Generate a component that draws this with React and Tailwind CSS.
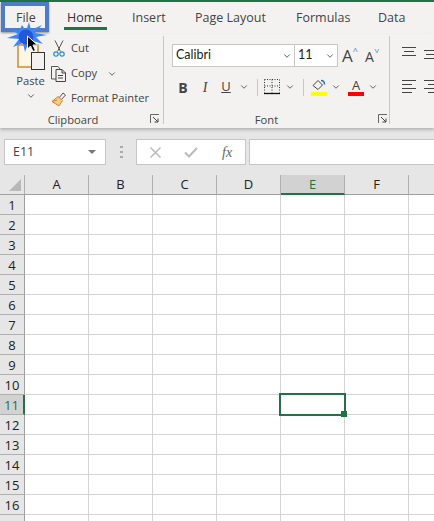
import React from "react";
import { ChevronDown } from "lucide-react";

const tabs = ["Insert", "Page Layout", "Formulas", "Data"];
const cols = ["A", "B", "C", "D", "E", "F"];
const rows = [1, 2, 3, 4, 5, 6, 7, 8, 9, 10, 11, 12, 13, 14, 15, 16];

const Chev = ({ className = "" }) => (
    <ChevronDown size={10} strokeWidth={2} className={"shrink-0 text-[#444] " + className} />
);

const Launcher = () => (
    <svg width="10" height="10" viewBox="0 0 10 10" className="shrink-0">
        <path d="M.5 9V.5H9" fill="none" stroke="#666" />
        <path d="M3 3l5 5M8 4.500V8H4.500" fill="none" stroke="#444" />
    </svg>
);

const PasteIcon = () => (
    <svg width="28" height="26" viewBox="0 0 28 26">
        <rect x="1" y="1" width="20" height="22" fill="#fff7e6" stroke="#d08a35" strokeWidth="1.500" />
        <rect x="14.500" y="8.500" width="13" height="17" fill="#f3f2f1" stroke="#333" />
    </svg>
);

const ScissorsIcon = () => (
    <svg width="12" height="18" viewBox="0 0 12 18">
        <path d="M2 0.500l5.500 11M10 0.500L4.500 11.500" fill="none" stroke="#555" />
        <circle cx="3" cy="14" r="2.200" fill="none" stroke="#2a8dd4" strokeWidth="1.200" />
        <circle cx="9" cy="14" r="2.200" fill="none" stroke="#2a8dd4" strokeWidth="1.200" />
    </svg>
);

const CopyIcon = () => (
    <svg width="16" height="16" viewBox="0 0 16 16">
        <path d="M5 13H.5V.5H7l2 2.500" fill="none" stroke="#555" />
        <path d="M5 3.500h6l3.500 3.500v8.500H5zM11 3.500V7h3.500M7 9.500h5M7 12h5" fill="none" stroke="#444" />
    </svg>
);

const PainterIcon = () => (
    <svg width="16" height="16" viewBox="0 0 16 16">
        <path d="M8 7l4-5 2.500 2L10 9z" fill="#f3f2f1" stroke="#555" />
        <path d="M7 5.500l4.500 4L8 15 1 10.500z" fill="#f7c98b" stroke="#d9822b" />
        <path d="M1 10.500l5-1.500" fill="none" stroke="#d9822b" />
    </svg>
);

const BorderIcon = () => (
    <svg width="16" height="16" viewBox="0 0 16 16">
        <path d="M.5 .5h15M.5 .5v13M15.500 .5v13M8 .5v13M.5 7h15" fill="none" stroke="#333" strokeDasharray="1 1.500" />
        <path d="M0 14.500h16" stroke="#111" strokeWidth="1.300" />
    </svg>
);

const FillIcon = () => (
    <div className="flex flex-col items-center w-4">
        <svg width="14" height="12" viewBox="0 0 14 12">
            <path d="M1 6.500L6 1.500l4.500 4.500L6 10.500z" fill="#f3f2f1" stroke="#444" />
            <path d="M9 1.500c2.500 0 3.500 1.500 3.500 4" fill="none" stroke="#2a6fb0" strokeWidth="1.500" />
        </svg>
        <div className="w-4 h-1 mt-px bg-[#ffff00]" />
    </div>
);

const AlignTop = ({ shift }) => (
    <svg width="14" height="14" viewBox="0 0 14 14" className="shrink-0">
        <path
            d={shift ? "M0 4.500h14M2 8.500h12M0 12.500h14" : "M0 1.500h14M2 5.500h10M0 9.500h14"}
            fill="none"
            stroke="#444"
        />
    </svg>
);

const AlignBottom = ({ right }) => (
    <svg width="14" height="14" viewBox="0 0 14 14" className="shrink-0">
        <path
            d={right ? "M0 .5h14M4 4.500h10M0 8.500h14M4 12.500h10" : "M0 .5h14M0 4.500h10M0 8.500h14M0 12.500h10"}
            fill="none"
            stroke="#444"
        />
    </svg>
);

const Sep = () => <div className="w-px h-[17px] bg-[#c8c8c8] shrink-0" />;

function Ribbon() {
    return (
        <div className="h-[94px] flex bg-[#f3f2f1] shadow-[0_2px_3px_rgba(0,0,0,0.22)] relative z-10 text-[11.200px]">
            {/* clipboard */}
            <div className="w-[163px] shrink-0 relative flex flex-col">
                <div className="flex-1 flex pt-[10px] pl-[17px]">
                    <div className="w-[27px] flex flex-col items-center">
                        <PasteIcon />
                        <span className="mt-[3px] text-[#444]">Paste</span>
                        <Chev className="mt-[1px]" />
                    </div>
                    <div className="ml-[7px] flex flex-col gap-[6px] -mt-[5px]">
                        <div className="flex items-center h-[19px]">
                            <div className="w-4 flex justify-center"><ScissorsIcon /></div>
                            <span className="ml-1 text-[#444]">Cut</span>
                        </div>
                        <div className="flex items-center h-[19px]">
                            <CopyIcon />
                            <span className="ml-1 text-[#444]">Copy</span>
                            <Chev className="ml-[10px]" />
                        </div>
                        <div className="flex items-center h-[19px]">
                            <PainterIcon />
                            <span className="ml-1 text-[#444] whitespace-nowrap">Format Painter</span>
                        </div>
                    </div>
                </div>
                <div className="h-[17px] pt-[2px] flex items-center justify-center relative text-[#444]">
                    <span className="mr-[17px]">Clipboard</span>
                    <div className="absolute left-[150px] top-[3px]"><Launcher /></div>
                </div>
            </div>
            <div className="w-px h-[88px] mt-[2px] bg-[#c8c6c4] shrink-0" />
            {/* font */}
            <div className="w-[225px] shrink-0 relative flex flex-col">
                <div className="flex-1 pt-[10px]">
                    <div className="flex items-center pl-[8px] h-[23px]">
                        <div className="w-[123px] h-[23px] bg-white border border-[#c6c6c6] flex items-center justify-between pl-[3px] pr-[2px] text-[12.500px] text-[#222] font-['Lato',sans-serif]">
                            Calibri <Chev />
                        </div>
                        <div className="w-[44px] h-[23px] -ml-px bg-white border border-[#c6c6c6] flex items-center justify-between pl-[3px] pr-[2px] text-[12.500px] text-[#222] font-['Lato',sans-serif]">
                            11 <Chev />
                        </div>
                        <div className="ml-1 flex items-start w-5 text-[17px] leading-none text-[#444]">
                            A<span className="text-[#2a8dd4] text-[9px] -mt-px">^</span>
                        </div>
                        <div className="ml-[3px] flex items-start w-5 text-[14px] leading-none text-[#444] pt-[2px]">
                            A<span className="text-[#2a8dd4] text-[9px] -mt-[4px] rotate-180">^</span>
                        </div>
                    </div>
                    <div className="flex items-center h-[18px] mt-[11px] pl-[8px]">
                        <span className="w-[22px] shrink-0 text-center font-bold text-[14px] text-[#444]">B</span>
                        <span className="w-[22px] shrink-0 text-center italic text-[14px] text-[#444] font-['Liberation_Serif',serif]">I</span>
                        <span className="w-[16px] shrink-0 ml-[2px] text-center underline text-[13px] text-[#444]">U</span>
                        <Chev className="ml-[5px]" />
                        <div className="ml-[8px]"><Sep /></div>
                        <div className="ml-[6px]"><BorderIcon /></div>
                        <Chev className="ml-[5px]" />
                        <div className="ml-[8px]"><Sep /></div>
                        <div className="ml-[7px]"><FillIcon /></div>
                        <Chev className="ml-[4px]" />
                        <div className="ml-[7px] flex flex-col items-center w-4 text-[13px] leading-[13px] text-[#444]">
                            A
                            <div className="w-4 h-1 bg-[#ff0000]" />
                        </div>
                        <Chev className="ml-[4px]" />
                    </div>
                </div>
                <div className="h-[17px] pt-[2px] flex items-center justify-center relative text-[#444]">
                    <span className="mr-[20px]">Font</span>
                    <div className="absolute left-[214px] top-[3px]"><Launcher /></div>
                </div>
            </div>
            <div className="w-px h-[88px] mt-[2px] bg-[#c8c6c4] shrink-0" />
            {/* alignment, cut off by the window */}
            <div className="flex-1 pl-3 pt-[12px] overflow-hidden">
                <div className="flex gap-2">
                    <AlignTop />
                    <AlignTop shift />
                </div>
                <div className="flex gap-2 mt-[20px]">
                    <AlignBottom />
                    <AlignBottom right />
                </div>
            </div>
        </div>
    );
}

function FormulaBar() {
    return (
        <div className="h-[47px] shrink-0 bg-[#e6e6e6] flex items-start pt-[11px] pl-1 text-[12.500px]">
            <div className="w-[102px] h-[26px] bg-white border border-[#c6c6c6] flex items-center justify-between pl-2 pr-[9px] text-[#444]">
                E11
                <svg width="8" height="4" viewBox="0 0 8 4"><path d="M0 0h8L4 4z" fill="#777" /></svg>
            </div>
            <div className="w-[30px] flex flex-col items-center gap-[3px] pt-[7px]">
                <div className="w-[3px] h-[2px] bg-[#aaa]" />
                <div className="w-[3px] h-[2px] bg-[#aaa]" />
                <div className="w-[3px] h-[2px] bg-[#aaa]" />
            </div>
            <div className="w-[110px] h-[26px] bg-white border border-[#c6c6c6] flex items-center">
                <div className="w-[37px] flex justify-center">
                    <svg width="11" height="11" viewBox="0 0 11 11"><path d="M.5 .5l10 10M10.500 .5l-10 10" stroke="#bbb" strokeWidth="1.500" /></svg>
                </div>
                <div className="w-[36px] flex justify-center">
                    <svg width="14" height="11" viewBox="0 0 14 11"><path d="M1 5.500l4 4L13 1" fill="none" stroke="#bbb" strokeWidth="2" /></svg>
                </div>
                <div className="w-[36px] text-center italic text-[14px] text-[#666] font-['Liberation_Serif',serif]">fx</div>
            </div>
            <div className="flex-1 h-[26px] ml-[3px] bg-white border-y border-l border-[#c6c6c6]" />
        </div>
    );
}

function Sheet() {
    return (
        <div className="relative flex-1 overflow-hidden bg-white text-[13px] text-[#222]">
            <div className="flex h-5 bg-[#e6e6e6] border-b border-[#9f9f9f]">
                <div className="w-[25px] shrink-0 border-r border-[#b0b0b0] relative flex items-end justify-end pr-[3px] pb-[3px]">
                    <svg width="12" height="12" viewBox="0 0 12 12"><path d="M12 0v12H0z" fill="#b8b8b8" /></svg>
                </div>
                {cols.map((c) => (
                    <div
                        key={c}
                        className={
                            "w-16 shrink-0 text-center leading-[19px] border-r border-[#b0b0b0] " +
                            (c === "E" ? "bg-[#d2d2d2] text-[#217346] border-b-2 border-b-[#217346] h-5" : "")
                        }
                    >
                        {c}
                    </div>
                ))}
            </div>
            {rows.map((r) => (
                <div key={r} className="flex h-5">
                    <div
                        className={
                            "w-[25px] shrink-0 text-center leading-[20px] border-b border-[#b0b0b0] border-r " +
                            (r === 11
                                ? "bg-[#d2d2d2] text-[#217346] border-r-2 border-r-[#217346]"
                                : "bg-[#e6e6e6] border-r-[#9f9f9f]")
                        }
                    >
                        {r}
                    </div>
                    {cols.map((c) => (
                        <div key={c} className="w-16 shrink-0 border-r border-b border-[#d4d4d4]" />
                    ))}
                    <div className="flex-1 border-b border-[#d4d4d4]" />
                </div>
            ))}
            {/* row 17 is only a sliver at the window edge */}
            <div className="flex h-5">
                <div className="w-[25px] shrink-0 bg-[#e6e6e6] border-r border-r-[#9f9f9f]" />
                {cols.map((c) => (
                    <div key={c} className="w-16 shrink-0 border-r border-[#d4d4d4]" />
                ))}
            </div>
            {/* selected cell E11 */}
            <div className="absolute left-[279px] top-[218px] w-[67px] h-[23px] border-2 border-[#217346]" />
            <div className="absolute left-[341px] top-[236px] w-[6px] h-[6px] bg-[#217346]" />
        </div>
    );
}

export default function App() {
    return (
        <div className="relative w-[434px] h-[521px] overflow-hidden flex flex-col bg-[#e6e6e6] text-[12px] font-['Open_Sans',sans-serif]">
            <div className="h-[2px] bg-[#217346] shrink-0" />
            <div className="h-[32px] shrink-0 flex items-center bg-[#f3f2f1] text-[12.500px] text-[#444] relative">
                <span className="ml-4 w-[51px]">File</span>
                <span className="relative font-medium w-[65px] text-[#333]">
                    Home
                    <div className="absolute left-[-3px] w-[43px] top-[18px] h-[3px] bg-[#217346]" />
                </span>
                <span className="w-[63px]">{tabs[0]}</span>
                <span className="w-[101px]">{tabs[1]}</span>
                <span className="w-[82px]">{tabs[2]}</span>
                <span>{tabs[3]}</span>
            </div>
            <Ribbon />
            <FormulaBar />
            <Sheet />

            {/* click highlight over the File tab */}
            <div className="absolute z-20 left-[1px] top-[2px] w-[48px] h-[30px] border-4 border-[#4f7cc9] shadow-[0_1px_2px_rgba(0,0,0,0.4)]" />
            <svg className="absolute z-20 left-[6px] top-[22px]" width="42" height="32" viewBox="0 0 42 32">
                <path
                    d="M16 3l4 6 3-9 2 8 11-5-7 8 12 2-11 2 7 7-10-3 1 11-6-8-3 8-2-9-10 4 6-8-12-1 11-4-9-6 10 3z"
                    fill="#3f86f5"
                />
                <circle cx="20" cy="15" r="7.500" fill="#2258dc" />
            </svg>
            <svg className="absolute z-20 left-[26px] top-[35px]" width="13" height="18" viewBox="0 0 13 18">
                <path d="M1.500 1v13l3-3 2.500 5.500 2.500-1L7 10h4.500z" fill="#000" stroke="#fff" strokeWidth="1" />
            </svg>
        </div>
    );
}
